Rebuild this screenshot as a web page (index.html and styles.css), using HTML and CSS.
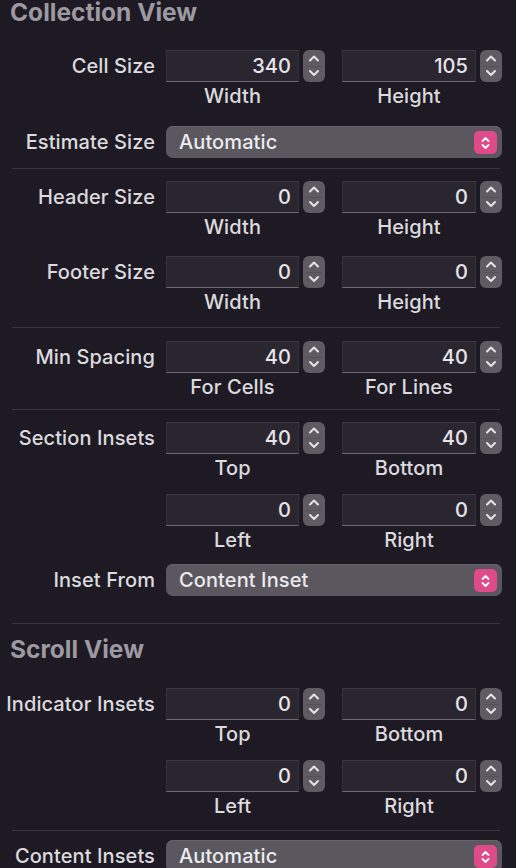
FILE: index.html
```html
<!DOCTYPE html>
<html>
<head>
<meta charset="utf-8">
<link rel="stylesheet" href="styles.css">
</head>
<body>
<div class="panel">
  <h2 class="title first">Collection View</h2>

  <div class="row r-cell">
    <div class="label">Cell Size</div>
    <div class="pair p1"><div class="field">340</div><div class="stepper"><svg viewBox="0 0 22 32"><path d="M7 10.5 L11 6.5 L15 10.5 M7 21 L11 25 L15 21"/></svg></div></div>
    <div class="pair p2"><div class="field">105</div><div class="stepper"><svg viewBox="0 0 22 32"><path d="M7 10.5 L11 6.5 L15 10.5 M7 21 L11 25 L15 21"/></svg></div></div>
  </div>
  <div class="sub"><span class="s1">Width</span><span class="s2">Height</span></div>

  <div class="row r-est">
    <div class="label">Estimate Size</div>
    <div class="popup"><span>Automatic</span><div class="pbtn"><svg viewBox="0 0 23 23"><path d="M8.5 10 L11.5 7 L14.5 10 M8.5 14 L11.5 17 L14.5 14"/></svg></div></div>
  </div>

  <div class="sep s-a"></div>

  <div class="row r-header">
    <div class="label">Header Size</div>
    <div class="pair p1"><div class="field">0</div><div class="stepper"><svg viewBox="0 0 22 32"><path d="M7 10.5 L11 6.5 L15 10.5 M7 21 L11 25 L15 21"/></svg></div></div>
    <div class="pair p2"><div class="field">0</div><div class="stepper"><svg viewBox="0 0 22 32"><path d="M7 10.5 L11 6.5 L15 10.5 M7 21 L11 25 L15 21"/></svg></div></div>
  </div>
  <div class="sub"><span class="s1">Width</span><span class="s2">Height</span></div>

  <div class="row r-footer">
    <div class="label">Footer Size</div>
    <div class="pair p1"><div class="field">0</div><div class="stepper"><svg viewBox="0 0 22 32"><path d="M7 10.5 L11 6.5 L15 10.5 M7 21 L11 25 L15 21"/></svg></div></div>
    <div class="pair p2"><div class="field">0</div><div class="stepper"><svg viewBox="0 0 22 32"><path d="M7 10.5 L11 6.5 L15 10.5 M7 21 L11 25 L15 21"/></svg></div></div>
  </div>
  <div class="sub"><span class="s1">Width</span><span class="s2">Height</span></div>

  <div class="sep s-b"></div>

  <div class="row r-min">
    <div class="label">Min Spacing</div>
    <div class="pair p1"><div class="field">40</div><div class="stepper"><svg viewBox="0 0 22 32"><path d="M7 10.5 L11 6.5 L15 10.5 M7 21 L11 25 L15 21"/></svg></div></div>
    <div class="pair p2"><div class="field">40</div><div class="stepper"><svg viewBox="0 0 22 32"><path d="M7 10.5 L11 6.5 L15 10.5 M7 21 L11 25 L15 21"/></svg></div></div>
  </div>
  <div class="sub"><span class="s1">For Cells</span><span class="s2">For Lines</span></div>

  <div class="sep s-c"></div>

  <div class="row r-section">
    <div class="label">Section Insets</div>
    <div class="pair p1"><div class="field">40</div><div class="stepper"><svg viewBox="0 0 22 32"><path d="M7 10.5 L11 6.5 L15 10.5 M7 21 L11 25 L15 21"/></svg></div></div>
    <div class="pair p2"><div class="field">40</div><div class="stepper"><svg viewBox="0 0 22 32"><path d="M7 10.5 L11 6.5 L15 10.5 M7 21 L11 25 L15 21"/></svg></div></div>
  </div>
  <div class="sub"><span class="s1">Top</span><span class="s2">Bottom</span></div>

  <div class="row r-lr">
    <div class="label"></div>
    <div class="pair p1"><div class="field">0</div><div class="stepper"><svg viewBox="0 0 22 32"><path d="M7 10.5 L11 6.5 L15 10.5 M7 21 L11 25 L15 21"/></svg></div></div>
    <div class="pair p2"><div class="field">0</div><div class="stepper"><svg viewBox="0 0 22 32"><path d="M7 10.5 L11 6.5 L15 10.5 M7 21 L11 25 L15 21"/></svg></div></div>
  </div>
  <div class="sub"><span class="s1">Left</span><span class="s2">Right</span></div>

  <div class="row r-inset">
    <div class="label">Inset From</div>
    <div class="popup"><span>Content Inset</span><div class="pbtn"><svg viewBox="0 0 23 23"><path d="M8.5 10 L11.5 7 L14.5 10 M8.5 14 L11.5 17 L14.5 14"/></svg></div></div>
  </div>

  <div class="sep s-d"></div>

  <h2 class="title second">Scroll View</h2>

  <div class="row r-ind">
    <div class="label">Indicator Insets</div>
    <div class="pair p1"><div class="field">0</div><div class="stepper"><svg viewBox="0 0 22 32"><path d="M7 10.5 L11 6.5 L15 10.5 M7 21 L11 25 L15 21"/></svg></div></div>
    <div class="pair p2"><div class="field">0</div><div class="stepper"><svg viewBox="0 0 22 32"><path d="M7 10.5 L11 6.5 L15 10.5 M7 21 L11 25 L15 21"/></svg></div></div>
  </div>
  <div class="sub"><span class="s1">Top</span><span class="s2">Bottom</span></div>

  <div class="row r-lr">
    <div class="label"></div>
    <div class="pair p1"><div class="field">0</div><div class="stepper"><svg viewBox="0 0 22 32"><path d="M7 10.5 L11 6.5 L15 10.5 M7 21 L11 25 L15 21"/></svg></div></div>
    <div class="pair p2"><div class="field">0</div><div class="stepper"><svg viewBox="0 0 22 32"><path d="M7 10.5 L11 6.5 L15 10.5 M7 21 L11 25 L15 21"/></svg></div></div>
  </div>
  <div class="sub"><span class="s1">Left</span><span class="s2">Right</span></div>

  <div class="sep s-e"></div>

  <div class="row r-content">
    <div class="label">Content Insets</div>
    <div class="popup"><span>Automatic</span><div class="pbtn"><svg viewBox="0 0 23 23"><path d="M8.5 10 L11.5 7 L14.5 10 M8.5 14 L11.5 17 L14.5 14"/></svg></div></div>
  </div>
</div>
</body>
</html>
```

FILE: styles.css
```css
html, body {
  margin: 0;
  padding: 0;
  background: #1e1a23;
  height: 100%;
  overflow: hidden;
}

.panel {
  width: 516px;
  font-family: Inter, "Liberation Sans", sans-serif;
  font-size: 20px;
  font-weight: 500;
  letter-spacing: 0.1px;
  color: #dcdade;
  display: flex;
  flex-direction: column;
}

.title {
  margin: 0;
  padding-left: 10px;
  font-size: 24.5px;
  font-weight: 700;
  line-height: 25px;
  height: 25px;
  color: #9d99a1;
  letter-spacing: 0;
}

.title.first { margin-top: 0; }
.title.second { margin-top: 13px; }

.row {
  display: flex;
  align-items: center;
  height: 32px;
}

.label {
  width: 155px;
  margin-right: 11px;
  text-align: right;
  white-space: nowrap;
  line-height: 32px;
  flex: none;
}

.pair {
  display: flex;
  gap: 4px;
  height: 32px;
  flex: none;
}

.p2 { margin-left: 17px; }

.field {
  box-sizing: border-box;
  height: 32px;
  background: #2a2630;
  border-top: 1px solid #3c3842;
  border-left: 1px solid #35313b;
  border-right: 1px solid #35313b;
  border-bottom: 1px solid #6d6a73;
  text-align: right;
  padding-right: 7px;
  line-height: 30px;
  color: #e6e4e8;
}

.p1 .field { width: 133px; }
.p2 .field { width: 134px; }

.stepper {
  width: 22px;
  height: 32px;
  border-radius: 6px;
  background: #5e5b63;
  position: relative;
}

.stepper::after {
  content: "";
  position: absolute;
  left: 3px;
  right: 3px;
  top: 16px;
  height: 1px;
  background: #535058;
}

.stepper svg,
.pbtn svg {
  display: block;
  width: 100%;
  height: 100%;
  position: relative;
  z-index: 1;
}

.stepper path {
  fill: none;
  stroke: #e6e4e8;
  stroke-width: 2;
  stroke-linecap: round;
  stroke-linejoin: round;
}

.sub {
  display: flex;
  height: 28px;
  line-height: 28px;
}

.sub span {
  display: block;
  text-align: center;
  white-space: nowrap;
}

.s1 { margin-left: 166px; width: 133px; }
.s2 { margin-left: 43px; width: 134px; }

.popup {
  box-sizing: border-box;
  width: 336px;
  height: 32px;
  border-radius: 7px;
  background: #5a575f;
  display: flex;
  align-items: center;
  justify-content: space-between;
  padding-left: 13px;
  padding-right: 5px;
  color: #ecebee;
  box-shadow: inset 0 1px 0 #66636b;
}

.pbtn {
  width: 23px;
  height: 23px;
  border-radius: 5px;
  background: #df4a88;
}

.pbtn path {
  fill: none;
  stroke: #ffffff;
  stroke-width: 1.8;
  stroke-linecap: round;
  stroke-linejoin: round;
}

.sep {
  height: 1px;
  margin-left: 12px;
  width: 488px;
  background: #38343e;
}

.r-cell { margin-top: 25px; }
.r-est { margin-top: 16px; }
.s-a { margin-top: 10px; }
.r-header { margin-top: 12px; }
.r-footer { margin-top: 15px; }
.s-b { margin-top: 11px; }
.r-min { margin-top: 13px; }
.s-c { margin-top: 8px; }
.r-section { margin-top: 12px; }
.r-lr { margin-top: 12px; }
.r-inset { margin-top: 10px; }
.s-d { margin-top: 27px; }
.r-ind { margin-top: 26px; }
.s-e { margin-top: 10px; }
.r-content { margin-top: 9px; }
```
